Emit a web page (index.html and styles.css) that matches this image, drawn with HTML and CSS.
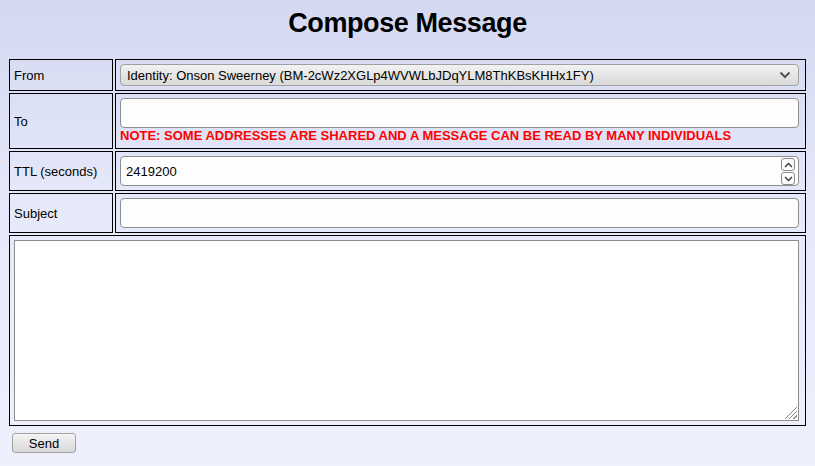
FILE: index.html
```html
<!DOCTYPE html>
<html>
<head>
<meta charset="utf-8">
<title>Compose Message</title>
<link rel="stylesheet" href="styles.css">
</head>
<body>
<h1 class="title">Compose Message</h1>
<form class="compose">
  <table class="grid">
    <tr>
      <td class="label">From</td>
      <td class="value">
        <div class="select">
          <span class="select-text">Identity: Onson Sweerney (BM-2cWz2XGLp4WVWLbJDqYLM8ThKBsKHHx1FY)</span>
          <svg class="chev" width="12" height="8" viewBox="0 0 12 8"><path d="M1.5 1.5 L6 6 L10.5 1.5" fill="none" stroke="#555" stroke-width="2"/></svg>
        </div>
      </td>
    </tr>
    <tr>
      <td class="label">To</td>
      <td class="value">
        <input class="field" type="text">
        <div class="note">NOTE: SOME ADDRESSES ARE SHARED AND A MESSAGE CAN BE READ BY MANY INDIVIDUALS</div>
      </td>
    </tr>
    <tr>
      <td class="label">TTL (seconds)</td>
      <td class="value">
        <div class="num-wrap">
          <input class="field" type="text" value="2419200">
          <div class="spin">
            <span class="spin-btn"><svg width="9" height="6" viewBox="0 0 9 6"><path d="M1 5 L4.5 1.5 L8 5" fill="none" stroke="#333" stroke-width="1.3"/></svg></span>
            <span class="spin-btn"><svg width="9" height="6" viewBox="0 0 9 6"><path d="M1 1 L4.5 4.5 L8 1" fill="none" stroke="#333" stroke-width="1.3"/></svg></span>
          </div>
        </div>
      </td>
    </tr>
    <tr>
      <td class="label">Subject</td>
      <td class="value"><input class="field" type="text"></td>
    </tr>
    <tr>
      <td class="value" colspan="2"><textarea class="body-text"></textarea></td>
    </tr>
  </table>
  <button class="send" type="button">Send</button>
</form>
</body>
</html>
```

FILE: styles.css
```css
html, body {
  margin: 0;
  padding: 0;
}
body {
  min-height: 466px;
  padding: 0 7px;
  background: linear-gradient(to bottom, #d4d8f1 0%, #e6e9f9 45%, #eef0fd 100%);
  font-family: "Liberation Sans", Arial, sans-serif;
  font-size: 13px;
  color: #000;
  box-sizing: border-box;
}
.title {
  margin: 0;
  padding-top: 8px;
  height: 30px;
  line-height: 30px;
  margin-bottom: 19px;
  text-align: center;
  font-size: 27px;
  font-weight: bold;
  letter-spacing: -0.4px;
}
.compose {
  margin: 0;
}
.grid {
  width: 100%;
  border-collapse: separate;
  border-spacing: 2px;
  table-layout: fixed;
}
.grid td {
  border: 1px solid #000;
  padding: 4px;
  vertical-align: middle;
}
.label {
  width: 94px;
  font-size: 13px;
}
.value {
  padding-right: 6px !important;
}
.select {
  height: 22px;
  box-sizing: border-box;
  border: 1px solid #a0a0a0;
  border-radius: 4px;
  background: linear-gradient(to bottom, #f2f2f2, #d9d9d9);
  display: flex;
  align-items: center;
  padding: 0 6px;
  justify-content: space-between;
}
.select-text {
  font-size: 13px;
  white-space: nowrap;
}
.chev {
  margin-right: 1px;
}
.field {
  display: block;
  width: 100%;
  height: 30px;
  box-sizing: border-box;
  border: 1px solid #8e8e8e;
  border-radius: 4px;
  background: #fdfdfe;
  font-family: "Liberation Sans", Arial, sans-serif;
  font-size: 13px;
  padding: 0 5px;
  margin: 0;
  color: #000;
}
.note {
  height: 16px;
  line-height: 16px;
  color: #ff0000;
  font-weight: bold;
  font-size: 13px;
  white-space: nowrap;
}
.num-wrap {
  position: relative;
}
.spin {
  position: absolute;
  right: 4px;
  top: 2px;
  display: flex;
  flex-direction: column;
  gap: 1px;
}
.spin-btn {
  width: 12px;
  height: 11px;
  border: 1px solid #8a8a8a;
  border-radius: 3px;
  background: #fbfbfb;
  display: flex;
  align-items: center;
  justify-content: center;
}
.body-text {
  display: block;
  width: 100%;
  height: 181px;
  box-sizing: border-box;
  border: 1px solid #8e8e8e;
  margin: 0;
  resize: none;
  background-color: #fff;
  background-image:
    linear-gradient(to bottom right, #fff 50%, transparent 50%),
    repeating-linear-gradient(-45deg, #fff 0 2px, #8a8a8a 2px 3px);
  background-size: 12px 12px, 12px 12px;
  background-position: right 1px bottom 1px, right 1px bottom 1px;
  background-repeat: no-repeat;
  font-family: "Liberation Sans", Arial, sans-serif;
  font-size: 13px;
}
.send {
  display: block;
  margin: 5px 0 0 5px;
  width: 64px;
  height: 20px;
  border: 1px solid #a3a3a3;
  border-radius: 3px;
  background: linear-gradient(to bottom, #f3f3f3, #d8d8d8);
  font-family: "Liberation Sans", Arial, sans-serif;
  font-size: 13px;
  color: #000;
  padding: 0;
}
```
